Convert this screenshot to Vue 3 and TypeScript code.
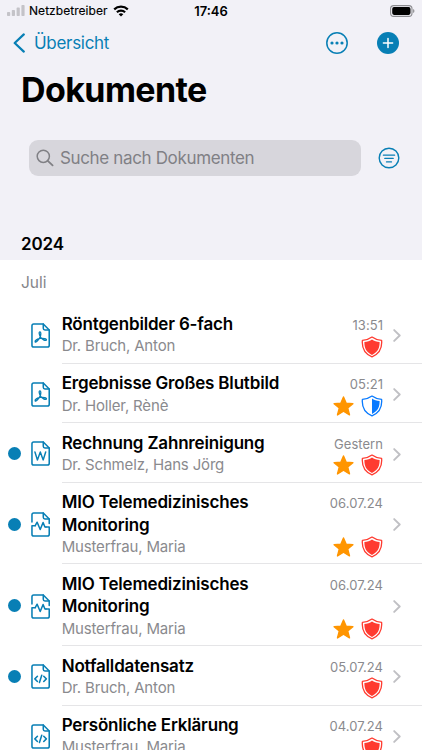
<script setup lang="ts">
type Kind = 'pdf' | 'word' | 'mio' | 'code'
type Shield = 'red' | 'half'

interface Doc {
  title: string
  author: string
  date: string
  kind: Kind
  shield: Shield
  star?: boolean
  unread?: boolean
}

const docs: Doc[] = [
  { title: 'Röntgenbilder 6-fach', author: 'Dr. Bruch, Anton', date: '13:51', kind: 'pdf', shield: 'red' },
  { title: 'Ergebnisse Großes Blutbild', author: 'Dr. Holler, Rènè', date: '05:21', kind: 'pdf', shield: 'half', star: true },
  { title: 'Rechnung Zahnreinigung', author: 'Dr. Schmelz, Hans Jörg', date: 'Gestern', kind: 'word', shield: 'red', star: true, unread: true },
  { title: 'MIO Telemedizinisches Monitoring', author: 'Musterfrau, Maria', date: '06.07.24', kind: 'mio', shield: 'red', star: true, unread: true },
  { title: 'MIO Telemedizinisches Monitoring', author: 'Musterfrau, Maria', date: '06.07.24', kind: 'mio', shield: 'red', star: true, unread: true },
  { title: 'Notfalldatensatz', author: 'Dr. Bruch, Anton', date: '05.07.24', kind: 'code', shield: 'red', unread: true },
  { title: 'Persönliche Erklärung', author: 'Musterfrau, Maria', date: '04.07.24', kind: 'code', shield: 'red' },
]
</script>

<template>
  <div class="screen">
    <header class="top">
      <div class="status">
        <div class="carrier">
          <svg class="signal" width="18" height="11" viewBox="0 0 18 11">
            <rect x="0" y="7" width="3.2" height="4" rx=".8" />
            <rect x="4.8" y="5" width="3.2" height="6" rx=".8" />
            <rect x="9.6" y="2.6" width="3.2" height="8.4" rx=".8" />
            <rect x="14.4" y="0" width="3.2" height="11" rx=".8" />
          </svg>
          <span class="carrier-name">Netzbetreiber</span>
          <svg width="16" height="12" viewBox="0 0 16 12" fill="none" stroke="#000" stroke-width="2.2">
            <path d="M1.2 4.4C5 .8 11 .8 14.8 4.4" />
            <path d="M3.9 7.2C6.2 5 9.8 5 12.1 7.2" />
            <path d="M8 11.5 5.7 9.2C7 8 9 8 10.3 9.2Z" fill="#000" stroke="none" />
          </svg>
        </div>
        <span class="clock">17:46</span>
        <svg class="battery" width="25" height="12" viewBox="0 0 25 12">
          <rect x=".6" y=".6" width="21.4" height="10.8" rx="3.1" fill="none" stroke="#8c8c90" stroke-width="1.1" />
          <rect x="2.2" y="2.1" width="18.3" height="7.8" rx="1.8" fill="#000" />
          <path d="M23.1 4v4c1.8-.7 1.8-3.3 0-4Z" fill="#8c8c90" />
        </svg>
      </div>

      <nav class="nav">
        <a class="back">
          <svg width="12" height="20" viewBox="0 0 12 20" fill="none" stroke="currentColor" stroke-width="2.2" stroke-linecap="round" stroke-linejoin="round">
            <path d="M10.8 1.4 1.7 10l9.1 8.6" />
          </svg>
          <span>Übersicht</span>
        </a>
        <div class="actions">
          <svg width="22" height="22" viewBox="0 0 22 22">
            <circle cx="11" cy="11" r="10.2" fill="none" stroke="currentColor" stroke-width="1.5" />
            <g fill="currentColor">
              <circle cx="6" cy="11" r="1.6" /><circle cx="11" cy="11" r="1.6" /><circle cx="16" cy="11" r="1.6" />
            </g>
          </svg>
          <svg width="22" height="22" viewBox="0 0 22 22">
            <circle cx="11" cy="11" r="11" fill="currentColor" />
            <path d="M11 6.4v9.2M6.4 11h9.2" stroke="#fff" stroke-width="1.5" stroke-linecap="round" />
          </svg>
        </div>
      </nav>

      <h1 class="heading">Dokumente</h1>

      <div class="search-row">
        <div class="search">
          <svg width="18" height="18" viewBox="0 0 18 18" fill="none" stroke="#808085" stroke-width="1.5" stroke-linecap="round">
            <circle cx="7.3" cy="7.3" r="6.1" />
            <path d="m11.8 11.8 4.8 4.6" stroke-width="1.8" />
          </svg>
          <span>Suche nach Dokumenten</span>
        </div>
        <svg class="filter" width="22" height="22" viewBox="0 0 22 22" fill="none" stroke="currentColor" stroke-linecap="round">
          <circle cx="11" cy="11" r="9.8" stroke-width="1.4" />
          <path d="M5.4 8.2h11.2M6.8 11.4h8.4M8.5 14.9h5" stroke-width="1.3" />
        </svg>
      </div>

      <h2 class="year">2024</h2>
    </header>

    <div class="month">Juli</div>

    <ul class="list">
      <li v-for="(doc, i) in docs" :key="i" class="row">
        <div class="marker"><span v-if="doc.unread" class="dot" /></div>
        <svg class="file" width="19.2" height="25" viewBox="0 0 20 26" fill="none" stroke="currentColor" stroke-width="1.6" stroke-linejoin="round" stroke-linecap="round">
          <template v-if="doc.kind === 'mio'">
            <path d="M1 10.4V2.9C1 1.8 1.7 1 2.8 1H12.8L19 7.2V12" />
            <path d="M4.4 14.2H1V23.1C1 24.3 1.7 25 2.8 25H17.2C18.3 25 19 24.3 19 23.1V15.6H15.6" />
            <path d="M4.4 14.2 6.4 10.6 9.6 18.2 12.6 10.9 14.5 15.6H15.6" />
          </template>
          <path v-else d="M2.8 1H12.8L19 7.2V23.1C19 24.3 18.3 25 17.2 25H2.8C1.7 25 1 24.3 1 23.1V2.9C1 1.8 1.7 1 2.8 1Z" />
          <path d="M12.8 1V5.4C12.8 6.5 13.4 7.2 14.5 7.2H19" />
          <path v-if="doc.kind === 'pdf'" d="M9.3 9.2C7.9 9.2 8.6 12.3 9.9 14.6 11.4 17.2 15 19 16 17.7 16.9 16.4 12.8 15.6 9.6 16.1 6.6 16.6 3.6 18.4 4.3 19.6 5.1 20.8 8.3 17.6 9.6 14.3 10.4 12.2 10.6 9.2 9.3 9.2Z" stroke-width="1.35" />
          <path v-if="doc.kind === 'word'" d="M4.1 11.4 6.7 19.7 9.7 11.4 12.7 19.7 15.3 11.4" stroke-width="1.5" />
          <path v-if="doc.kind === 'code'" d="M6.7 12.8 4 15.5 6.7 18.2M13.3 12.8 16 15.5 13.3 18.2M11.2 11.8 8.8 19.2" stroke-width="1.6" />
        </svg>
        <div class="content">
          <div class="texts">
            <div class="title">{{ doc.title }}</div>
            <div class="author">{{ doc.author }}</div>
          </div>
          <div class="trail">
            <span class="date">{{ doc.date }}</span>
            <div class="badges">
              <svg v-if="doc.star" width="21" height="20" viewBox="0 0 21 20" fill="#ff9500" stroke="#ff9500" stroke-width="1.4" stroke-linejoin="round">
                <path d="m10.5 1 2.6 6.1 6.8.6-5.2 4.3 1.8 6.9-6-3.7-6 3.7L6.3 12 1.1 7.7 7.9 7.1Z" />
              </svg>
              <svg width="22" height="22" viewBox="0 0 22 22" :class="doc.shield">
                <path d="M11 1.1C13.2 2.8 17.4 4.1 20.6 4.3 21.3 11.8 18.6 17.8 11 20.9 3.4 17.8.7 11.8 1.4 4.3 4.6 4.1 8.8 2.8 11 1.1Z" fill="#fff" stroke="currentColor" stroke-width="1.3" stroke-linejoin="round" />
                <path v-if="doc.shield === 'red'" d="M11 3.5C12.9 4.8 16 5.8 18.6 6.1 18.8 11.9 16.7 16.4 11 19 5.3 16.4 3.2 11.9 3.4 6.1 6 5.8 9.1 4.8 11 3.5Z" fill="currentColor" />
                <path v-else d="M11 3.5C12.9 4.8 16 5.8 18.6 6.1 18.8 11.9 16.7 16.4 11 19Z" fill="currentColor" />
              </svg>
            </div>
          </div>
          <svg class="chevron" width="8" height="13" viewBox="0 0 8 13" fill="none" stroke="#c0c0c4" stroke-width="1.9" stroke-linecap="round" stroke-linejoin="round">
            <path d="m1.2 1.1 5.5 5.4-5.5 5.4" />
          </svg>
        </div>
      </li>
    </ul>
  </div>
</template>

<style>
body {
  background: #fff;
  overflow: hidden;
}
</style>

<style scoped>
.screen {
  width: 422px;
  height: 750px;
  overflow: hidden;
  background: #fff;
  color: #000;
  font-family: Inter, 'Liberation Sans', sans-serif;
}
svg {
  display: block;
  flex: none;
}
.top {
  height: 260px;
  background: #f2f1f7;
  overflow: hidden;
}
.status {
  display: grid;
  grid-template-columns: 1fr auto 1fr;
  align-items: center;
  height: 21px;
  padding: 0 7px;
}
.carrier {
  display: flex;
  align-items: center;
}
.signal {
  fill: #c4c3c8;
}
.carrier-name {
  margin: 0 5px 0 4px;
  font-size: 12px;
  letter-spacing: 0.05px;
  -webkit-text-stroke: 0.15px #000;
}
.clock {
  font-size: 13px;
  font-weight: 600;
}
.battery {
  justify-self: end;
}
.nav {
  display: flex;
  align-items: center;
  justify-content: space-between;
  height: 43px;
  padding: 0 23px 0 13px;
  color: #087fb5;
}
.back {
  display: flex;
  align-items: center;
  gap: 9px;
  font-size: 17px;
  letter-spacing: -0.3px;
}
.actions {
  display: flex;
  gap: 29px;
}
.heading {
  margin: 4px 0 0 21px;
  font-size: 34px;
  line-height: 44px;
  font-weight: 700;
  letter-spacing: -0.6px;
}
.search-row {
  display: flex;
  align-items: center;
  justify-content: space-between;
  margin-top: 28px;
  padding: 0 22px 0 29px;
  color: #087fb5;
}
.search {
  display: flex;
  align-items: center;
  gap: 6px;
  width: 332px;
  height: 36px;
  box-sizing: border-box;
  padding-left: 7px;
  border-radius: 9px;
  background: #d7d6dc;
  color: #808085;
  font-size: 17px;
  letter-spacing: -0.35px;
}
.year {
  margin: 56px 0 0 21px;
  font-size: 17px;
  line-height: 24px;
  font-weight: 600;
  letter-spacing: -0.1px;
}
.month {
  height: 44.6px;
  padding-left: 21px;
  font-size: 15.5px;
  line-height: 45px;
  color: #86868b;
}
.list {
  margin: 0;
  padding: 0;
  list-style: none;
}
.row {
  display: flex;
  align-items: stretch;
  padding-left: 8px;
}
.marker {
  display: flex;
  align-items: center;
  width: 22.7px;
}
.dot {
  width: 13px;
  height: 13px;
  margin-top: 1px;
  border-radius: 50%;
  background: #087fb5;
}
.file {
  align-self: center;
  margin-top: 1.6px;
  color: #087fb5;
}
.content {
  flex: 1;
  display: flex;
  align-items: stretch;
  margin-left: 11.8px;
  padding: 8.5px 21px 5.3px 0;
  border-bottom: 1px solid #e5e5e7;
}
.texts {
  flex: 1;
  min-width: 0;
}
.title {
  max-width: 230px;
  font-size: 17px;
  line-height: 22.3px;
  font-weight: 600;
  letter-spacing: -0.18px;
}
.author {
  font-size: 15px;
  line-height: 22.3px;
  letter-spacing: -0.17px;
  color: #8a8a8e;
}
.trail {
  display: flex;
  flex-direction: column;
  align-items: flex-end;
  justify-content: space-between;
}
.date {
  margin-top: 2px;
  font-size: 13px;
  line-height: 20px;
  letter-spacing: 0.05px;
  color: #8a8a8e;
}
.badges {
  display: flex;
  align-items: center;
  gap: 7px;
}
.red {
  color: #ff3b30;
}
.half {
  color: #087aff;
}
.chevron {
  align-self: center;
  margin-left: 10px;
}
</style>
